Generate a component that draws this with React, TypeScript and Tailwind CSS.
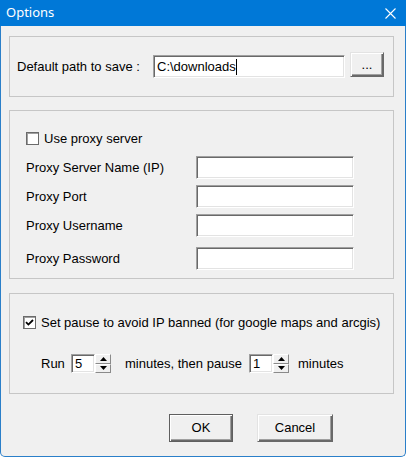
import { ReactNode } from 'react';

const ui = { fontFamily: '"Liberation Sans", Arial, sans-serif' };

// sunken 3D edit box, classic Win32 look
function Edit({ className = '', children }: { className?: string; children?: ReactNode }) {
  return (
    <div
      className={`bg-white border border-t-[#a0a0a0] border-l-[#a0a0a0] border-b-white border-r-white shadow-[inset_1px_1px_0_#696969,inset_-1px_-1px_0_#e3e3e3] flex items-center px-[3px] text-[13px] ${className}`}
    >
      {children}
    </div>
  );
}

function Button({ label, className = '', isDefault = false }: { label: string; className?: string; isDefault?: boolean }) {
  return (
    <div
      className={`bg-[#f0f0f0] flex items-center justify-center text-[13px] shadow-[inset_1px_1px_0_#fff,inset_-1px_-1px_0_#696969,inset_-2px_-2px_0_#a0a0a0] ${
        isDefault ? 'border border-[#5f5f5f]' : 'border border-t-[#e3e3e3] border-l-[#e3e3e3] border-b-[#696969] border-r-[#696969]'
      } ${className}`}
    >
      {label}
    </div>
  );
}

function CheckBox({ checked }: { checked?: boolean }) {
  return (
    <div className="w-[13px] h-[13px] bg-white border border-[#6b6b6b] shadow-[inset_1px_1px_0_#a0a0a0] flex items-center justify-center shrink-0">
      {checked && (
        <svg width="9" height="9" viewBox="0 0 9 9">
          <path d="M1 4.2 L3.4 6.6 L8 2" stroke="#000" strokeWidth="1.8" fill="none" />
        </svg>
      )}
    </div>
  );
}

function Arrow({ up }: { up?: boolean }) {
  return (
    <div className="flex-1 bg-[#f0f0f0] border border-t-white border-l-white border-b-[#8a8a8a] border-r-[#8a8a8a] flex items-center justify-center">
      <svg width="7" height="4" viewBox="0 0 7 4">
        {up ? <path d="M0 4 L3.5 0 L7 4 Z" fill="#000" /> : <path d="M0 0 L3.5 4 L7 0 Z" fill="#000" />}
      </svg>
    </div>
  );
}

function Spin({ value }: { value: string }) {
  return (
    <div className="flex h-[19px]">
      <Edit className="w-[24px] h-[19px]">{value}</Edit>
      <div className="w-[16px] flex flex-col">
        <Arrow up />
        <Arrow />
      </div>
    </div>
  );
}

function Group({ className = '', children }: { className?: string; children: ReactNode }) {
  return <div className={`ml-[8px] w-[385px] border border-[#c6c6c6] ${className}`}>{children}</div>;
}

const proxyRows = [
  { label: 'Proxy Server Name (IP)', mt: 'mt-[11px]' },
  { label: 'Proxy Port', mt: 'mt-[6px]' },
  { label: 'Proxy Username', mt: 'mt-[6px]' },
  { label: 'Proxy Password', mt: 'mt-[10px]' },
];

export default function App() {
  return (
    <div className="w-[406px] h-[457px] flex flex-col text-black select-none" style={ui}>
      {/* title bar */}
      <div className="h-[26px] bg-[#0078d7] flex items-center justify-between pl-[6px] pr-[10px] shrink-0">
        <span className="text-white text-[13px]" style={{ fontFamily: '"Noto Sans", "Open Sans", sans-serif' }}>
          Options
        </span>
        <svg width="11" height="11" viewBox="0 0 11 11">
          <path d="M0.5 0.5 L10.5 10.5 M10.5 0.5 L0.5 10.5" stroke="#fff" strokeWidth="1.1" />
        </svg>
      </div>

      <div className="flex-1 bg-[#f0f0f0] border-x border-b border-[#2a7fc9] rounded-b-[5px] flex flex-col">
        {/* save path */}
        <Group className="mt-[10px] h-[61px] flex items-center pl-[7px]">
          <span className="text-[13px] w-[136px]">Default path to save :</span>
          <Edit className="w-[192px] h-[23px]">
            C:\downloads<span className="inline-block w-px h-[16px] bg-black" />
          </Edit>
          <Button label="..." className="ml-[5px] w-[34px] h-[25px] -translate-y-[2px]" />
        </Group>

        {/* proxy */}
        <Group className="mt-[13px] h-[169px] flex flex-col pl-[16px] pt-[21px]">
          <div className="flex items-center h-[13px] gap-[5px]">
            <CheckBox />
            <span className="text-[13px]">Use proxy server</span>
          </div>
          {proxyRows.map((r) => (
            <div key={r.label} className={`flex items-center h-[23px] ${r.mt}`}>
              <span className="text-[13px] w-[170px]">{r.label}</span>
              <Edit className="w-[158px] h-[23px]" />
            </div>
          ))}
        </Group>

        {/* pause */}
        <Group className="mt-[14px] h-[101px] flex flex-col pl-[13px] pt-[22px]">
          <div className="flex items-center h-[13px] gap-[5px]">
            <CheckBox checked />
            <span className="text-[13px]">Set pause to avoid IP banned (for google maps and arcgis)</span>
          </div>
          <div className="flex items-center mt-[25px] h-[19px] pl-[18px] text-[13px]">
            <span className="w-[30px]">Run</span>
            <Spin value="5" />
            <span className="ml-[14px] w-[124px]">minutes, then pause</span>
            <Spin value="1" />
            <span className="ml-[9px]">minutes</span>
          </div>
        </Group>

        {/* dialog buttons */}
        <div className="flex mt-[20px] pl-[168px] gap-[24px]">
          <Button label="OK" isDefault className="w-[64px] h-[28px]" />
          <Button label="Cancel" className="w-[76px] h-[28px]" />
        </div>
      </div>
    </div>
  );
}
